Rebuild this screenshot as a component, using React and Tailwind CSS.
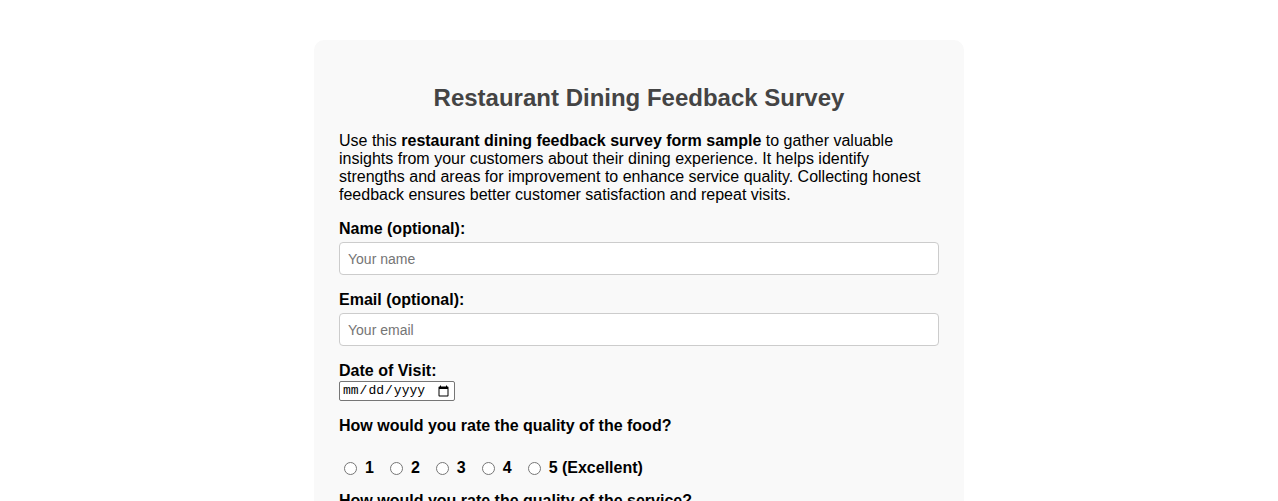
import React from "react";

const ratings = ["1", "2", "3", "4", "5 (Excellent)"];

function RatingQuestion({ name, question }) {
  return (
    <div className="mb-[15px]">
      <label className="block font-bold leading-[18px] mb-[24px]">{question}</label>
      <div className="flex items-center">
        {ratings.map((r) => (
          <label key={r} className="flex items-center font-bold leading-[18px] mr-[11px]">
            <input type="radio" name={name} value={r} className="ml-[5px] mr-[8px] w-[13px] h-[13px] accent-gray-500" />
            {r}
          </label>
        ))}
      </div>
    </div>
  );
}

export default function App() {
  return (
    <div className="min-h-screen bg-white text-black" style={{ fontFamily: '"Liberation Sans", Arial, sans-serif' }}>
      <div className="w-[650px] mx-auto mt-[40px] bg-[#f9f9f9] rounded-[10px] px-[25px] pt-[44px] pb-[25px]">
        <h1 className="text-[24px] font-bold text-[#444] text-center leading-[28px] mb-[20px]">
          Restaurant Dining Feedback Survey
        </h1>
        <p className="text-[16px] leading-[18px] mb-[16px]">
          Use this <strong>restaurant dining feedback survey form sample</strong> to gather valuable insights from your
          customers about their dining experience. It helps identify strengths and areas for improvement to enhance
          service quality. Collecting honest feedback ensures better customer satisfaction and repeat visits.
        </p>

        <form>
          <div className="mb-[16px]">
            <label className="block font-bold leading-[18px] mb-[4px]">Name (optional):</label>
            <input
              type="text"
              placeholder="Your name"
              className="block w-full h-[33px] px-[8px] bg-white border border-[#ccc] rounded-[4px] text-[14px] placeholder:text-[#757575]"
            />
          </div>
          <div className="mb-[16px]">
            <label className="block font-bold leading-[18px] mb-[4px]">Email (optional):</label>
            <input
              type="email"
              placeholder="Your email"
              className="block w-full h-[33px] px-[8px] bg-white border border-[#ccc] rounded-[4px] text-[14px] placeholder:text-[#757575]"
            />
          </div>
          <div className="mb-[16px]">
            <label className="block font-bold leading-[18px] mb-[1px]">Date of Visit:</label>
            <input
              type="date"
              className="block w-[116px] h-[20px] px-[2px] bg-white border border-[#767676] rounded-[2px] text-[13px]"
              style={{ fontFamily: '"Liberation Mono", monospace' }}
            />
          </div>

          <RatingQuestion name="food" question="How would you rate the quality of the food?" />
          <RatingQuestion name="service" question="How would you rate the quality of the service?" />
          <RatingQuestion name="ambience" question="How would you rate the ambience?" />
        </form>
      </div>
    </div>
  );
}
